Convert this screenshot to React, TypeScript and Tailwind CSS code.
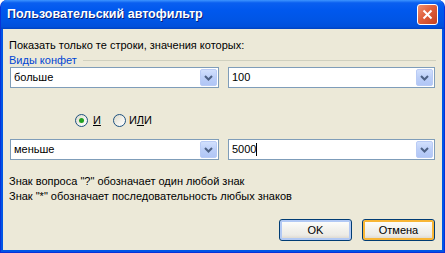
import React from 'react';

const ChevronButton = () => (
  <div className="ml-auto mr-[1px] w-[17px] h-[17px] rounded-[2px] border border-[#B9CBF5] bg-[linear-gradient(180deg,#D2E0FD_0%,#BCCFF8_50%,#B1C6F6_100%)] flex items-center justify-center">
    <svg width="9" height="6" viewBox="0 0 9 6">
      <path d="M1 1 L4.5 4.5 L8 1" fill="none" stroke="#4D6185" strokeWidth="2" />
    </svg>
  </div>
);

type ComboProps = {
  value: string;
  width: string;
  caret?: boolean;
};

const Combo = ({ value, width, caret }: ComboProps) => (
  <div className={`${width} h-[21px] bg-white border border-[#7F9DB9] flex items-center`}>
    <span className="pl-[3px] text-black leading-none flex items-center">
      {value}
      {caret && <span className="inline-block w-[1px] h-[13px] bg-black" />}
    </span>
    <ChevronButton />
  </div>
);

const Radio = ({ checked }: { checked?: boolean }) => (
  <div className="w-[13px] h-[13px] rounded-full border border-[#1C5180] bg-[linear-gradient(135deg,#DCD9C8_0%,#F4F3EE_60%,#FFFFFF_100%)] flex items-center justify-center">
    {checked && <div className="w-[5px] h-[5px] rounded-full bg-[#21A121]" />}
  </div>
);

const XpButton = ({ label, focus }: { label: string; focus?: boolean }) => (
  <div
    className={`w-[73px] h-[22px] rounded-[3px] border border-[#003C74] bg-[linear-gradient(180deg,#FFFFFF_0%,#F4F3EE_40%,#ECEBE6_75%,#D6D0C5_100%)] flex items-center justify-center text-black ${
      focus ? 'shadow-[inset_0_0_0_2px_#F8B636]' : 'shadow-[inset_0_0_0_2px_#B2C9F4]'
    }`}
  >
    {label}
  </div>
);

export default function App() {
  return (
    <div className="w-[445px] h-[253px] flex flex-col rounded-t-[7px] bg-[#0055E5] border-x border-b border-[#0831D9] overflow-hidden font-['Liberation_Sans',Arial,sans-serif]">
      {/* title bar */}
      <div className="h-[29px] flex items-center pl-[6px] pr-[6px] bg-[linear-gradient(180deg,#3D95FF_0%,#0A5FF0_10%,#0058EE_35%,#0055E5_70%,#0050DB_92%,#0042C0_100%)]">
        <span className="text-white text-[12.5px] font-bold [text-shadow:1px_1px_0_#0A1F7A]">
          Пользовательский автофильтр
        </span>
        <div className="ml-auto w-[21px] h-[21px] rounded-[3px] border border-white bg-[linear-gradient(135deg,#F09070_0%,#E0603C_45%,#C4401F_100%)] flex items-center justify-center">
          <svg width="11" height="11" viewBox="0 0 11 11">
            <path d="M1.5 1.5 L9.5 9.5 M9.5 1.5 L1.5 9.5" stroke="white" strokeWidth="2" />
          </svg>
        </div>
      </div>

      {/* client area */}
      <div className="flex-1 mx-[2px] mb-[2px] bg-[#ECE9D8] flex flex-col text-[11px] text-black">
        <div className="mt-[10px] ml-[6px] h-[13px] leading-[13px]">
          Показать только те строки, значения которых:
        </div>
        <div className="mt-[2px] ml-[6px] mr-[6px] h-[13px] flex items-center">
          <span className="text-[#0046D5] leading-[13px]">Виды конфет</span>
          <div className="flex-1 ml-[6px] h-[1px] bg-[#D0D0BF]" />
        </div>
        <div className="mt-0 ml-[7px] flex gap-[9px]">
          <Combo value="больше" width="w-[209px]" />
          <Combo value="100" width="w-[207px]" />
        </div>

        <div className="mt-[25px] ml-[72px] h-[14px] flex items-center">
          <Radio checked />
          <span className="ml-[5px] underline">И</span>
          <div className="ml-[12px]">
            <Radio />
          </div>
          <span className="ml-[3px]">
            И<span className="underline">Л</span>И
          </span>
        </div>

        <div className="mt-[12px] ml-[7px] flex gap-[9px]">
          <Combo value="меньше" width="w-[209px]" />
          <Combo value="5000" width="w-[207px]" caret />
        </div>

        <div className="mt-[14px] ml-[6px] leading-[15px]">
          <div>Знак вопроса "?" обозначает один любой знак</div>
          <div>Знак "*" обозначает последовательность любых знаков</div>
        </div>

        <div className="mt-[15px] ml-auto mr-[7px] flex gap-[10px]">
          <XpButton label="OK" />
          <XpButton label="Отмена" focus />
        </div>
      </div>
    </div>
  );
}
